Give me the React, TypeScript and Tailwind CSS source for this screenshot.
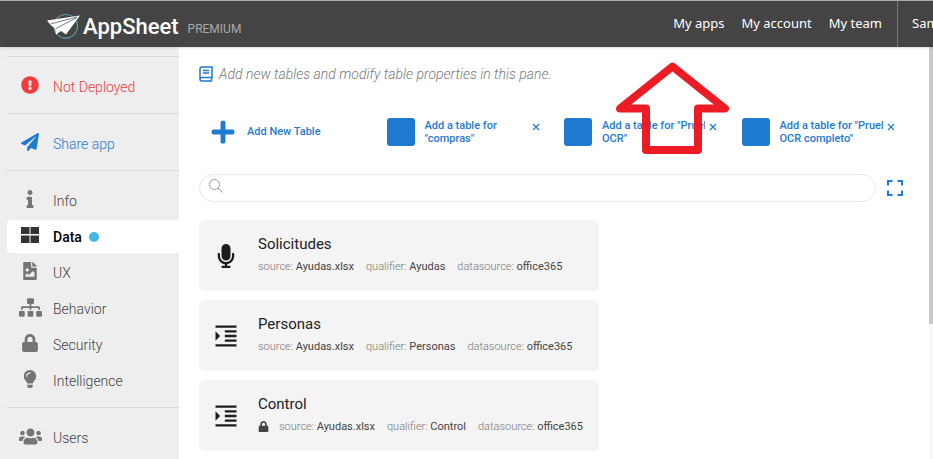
import type { ReactNode } from 'react'
import {
  FaExclamationCircle,
  FaFileImage,
  FaInfo,
  FaLightbulb,
  FaLock,
  FaMicrophone,
  FaPaperPlane,
  FaPlus,
  FaSitemap,
  FaUsers,
} from 'react-icons/fa'
import { MdFormatIndentIncrease } from 'react-icons/md'

function Logo() {
  return (
    <svg width="34" height="30" viewBox="0 0 34 30" aria-hidden="true">
      <circle cx="18.700" cy="17.300" r="11.800" fill="none" stroke="#5f97a8" strokeWidth="1.200" />
      <path d="M0 11.500 33 6.500 19 25.500 14 22 9 25.500 8 19.500 3.500 16Z" fill="#fff" />
      <path d="M30 8 3.500 15M30 8.500 9 19.500" stroke="#444" strokeWidth="0.700" fill="none" />
    </svg>
  )
}

function DataIcon() {
  return (
    <svg width="18" height="16" viewBox="0 0 18 16" fill="currentColor" aria-hidden="true">
      <path d="M0 0h8.500v7H0zM9.500 0H18v7H9.500zM0 8.500h8.500V16H0zM9.500 8.500H18V16H9.500z" />
    </svg>
  )
}

function BookIcon() {
  return (
    <svg width="14" height="16" viewBox="0 0 14 16" fill="none" stroke="#1f7ad1" aria-hidden="true">
      <path d="M1 13V3Q1 1 3 1H13v10.500H3Q1 11.500 1 13.200T3 15H13M12.500 11.500V15" strokeWidth="1.500" />
      <path d="M4 4.500h6M4 7h6" strokeWidth="1.400" />
    </svg>
  )
}

function NavItem({ icon, label, className = 'text-[#444]', iconClass = 'text-[#757575]' }: {
  icon: ReactNode
  label: string
  className?: string
  iconClass?: string
}) {
  return (
    <a href="#" className={`flex h-[33px] items-center pt-px text-sm ${className}`}>
      <span className={`-mt-1 flex w-[46px] shrink-0 justify-center ${iconClass}`}>{icon}</span>
      {label}
    </a>
  )
}

function Suggestion({ first, second }: { first: string; second: string }) {
  return (
    <div className="flex h-7 pl-[10px]">
      <button className="flex min-w-0 gap-[10px] text-left text-[11px] leading-[13px] font-medium text-[#1f7ad1]">
        <span className="size-7 shrink-0 rounded-[3px] bg-[#1f7ad1]" />
        <span className="w-[103px] overflow-hidden whitespace-nowrap pt-px">
          {first}
          <br />
          {second}
        </span>
      </button>
      <button aria-label="Dismiss" className="ml-[2px] flex h-4 w-3 shrink-0 items-center justify-center pt-px text-[#1f7ad1]">
        <svg width="8" height="8" viewBox="0 0 8 8" stroke="currentColor" strokeWidth="1.200" aria-hidden="true">
          <path d="M1 1l6 6M7 1 1 7" />
        </svg>
      </button>
    </div>
  )
}

function TableCard({ name, qualifier, icon, locked }: {
  name: string
  qualifier: string
  icon: ReactNode
  locked?: boolean
}) {
  const meta = [
    ['source', 'Ayudas.xlsx'],
    ['qualifier', qualifier],
    ['datasource', 'office365'],
  ]
  return (
    <li className="flex h-[71px] w-[400px] items-center rounded-md bg-[#f4f4f4]">
      <span className="flex w-[59px] justify-center pr-[5px] text-[#1c1c1c]">{icon}</span>
      <div className="pb-[3px]">
        <h2 className="text-[15px] leading-5 text-[#222]">{name}</h2>
        <div className="mt-[5px] flex items-center gap-3 text-[11px] leading-4 font-light">
          {locked && <FaLock className="-mr-[2px] text-[#444]" size={11} />}
          {meta.map(([key, value]) => (
            <span key={key} className="text-[#777]">
              {key}: <span className="font-normal text-[#444]">{value}</span>
            </span>
          ))}
        </div>
      </div>
    </li>
  )
}

export default function App() {
  return (
    <div className="flex h-screen flex-col overflow-hidden bg-white font-[Roboto,sans-serif]">
      {/* Top bar */}
      <header className="z-10 flex h-[47px] shrink-0 items-center overflow-hidden border-t border-[#aaa] bg-[#444] pl-[47px] shadow">
        <Logo />
        <span className="ml-[2px] pt-[4px] text-[22px] font-medium text-white">AppSheet</span>
        <span className="ml-[9px] pt-[9px] text-xs text-[#aaa]">PREMIUM</span>
        <nav className="ml-auto flex h-full shrink-0 items-center gap-[17px] font-['Noto_Sans',sans-serif] text-[13px] text-white">
          <a href="#">My apps</a>
          <a href="#">My account</a>
          <a href="#">My team</a>
          <a href="#" className="-ml-[2px] flex h-full w-9 items-center overflow-hidden border-l border-[#777] pl-[14px]">
            Samuel
          </a>
        </nav>
      </header>

      <div className="flex min-h-0 flex-1">
        {/* Sidebar */}
        <aside className="w-[179px] shrink-0 overflow-hidden bg-[#eee] pt-[9px] pl-[7px] font-light">
          <div className="border-t border-[#d9d9d9] pt-[13px] pb-[10px]">
            <NavItem icon={<FaExclamationCircle size={18} />} label="Not Deployed" className="text-[#f23a3f]" iconClass="text-[#f23a3f]" />
          </div>
          <div className="border-t border-[#d9d9d9] pt-[13px] pb-[10px]">
            <NavItem icon={<FaPaperPlane size={18} />} label="Share app" className="text-[#1f7ad1]" iconClass="text-[#1f7ad1]" />
          </div>
          <nav className="flex flex-col gap-[3px] border-t border-[#d9d9d9] pt-[13px] pb-[10px]">
            <NavItem icon={<FaInfo size={18} />} label="Info" />
            <div className="flex items-center rounded-l bg-white">
              <NavItem icon={<DataIcon />} label="Data" className="font-medium text-black" iconClass="text-[#333]" />
              <span className="ml-[7px] size-[10px] rounded-full bg-[#41b9e6]" />
            </div>
            <NavItem icon={<FaFileImage size={18} />} label="UX" />
            <NavItem icon={<FaSitemap size={23} />} label="Behavior" />
            <NavItem icon={<FaLock size={18} />} label="Security" />
            <NavItem icon={<FaLightbulb size={18} />} label="Intelligence" />
          </nav>
          <div className="border-t border-[#d9d9d9] pt-[13px]">
            <NavItem icon={<FaUsers size={23} />} label="Users" />
          </div>
        </aside>

        {/* Data pane */}
        <main className="min-w-0 flex-1 pt-[17px] pr-5 pl-5">
          <p className="flex h-5 items-center gap-[6px] text-sm font-light text-[#777] italic">
            <BookIcon />
            Add new tables and modify table properties in this pane.
          </p>

          <div className="relative mt-[34px] grid grid-cols-4">
            <button className="flex h-7 items-center gap-[11px] pl-[11px] text-[11px] font-medium text-[#1f7ad1]">
              <FaPlus size={26} />
              Add New Table
            </button>
            <Suggestion first={'Add a table for'} second={'"compras"'} />
            <Suggestion first={'Add a table for "Prueba'} second={'OCR"'} />
            <Suggestion first={'Add a table for "Prueba'} second={'OCR completo"'} />
            <svg width="118" height="96" viewBox="0 0 118 96" fill="none" className="absolute -top-[58px] left-[415px]" aria-hidden="true">
              <path
                d="M58.500 6.500 111 48.500H84v41.500H32V48.500H6Z"
                stroke="#ed1c24"
                strokeWidth="8"
                strokeLinejoin="round"
              />
            </svg>
          </div>

          <div className="mt-7 flex items-center">
            <label className="flex h-7 min-w-0 flex-1 items-center rounded-full border border-[#e8e8e8] px-[9px]">
              <svg width="14" height="14" viewBox="0 0 14 14" fill="none" stroke="#999" className="mb-1" aria-hidden="true">
                <circle cx="5.500" cy="5.500" r="5" />
                <path d="M9 9l4.500 4.500" />
              </svg>
              <input type="text" aria-label="Search tables" className="min-w-0 flex-1 pl-2 text-sm outline-none" />
            </label>
            <button aria-label="Expand all" className="mr-[6px] ml-[11px]">
              <svg width="16" height="16" viewBox="0 0 16 16" fill="none" stroke="#1f7ad1" strokeWidth="2" aria-hidden="true">
                <path d="M1 5.500V1h4.500M10.500 1H15v4.500M15 10.500V15h-4.500M5.500 15H1v-4.500" />
              </svg>
            </button>
          </div>

          <ul className="mt-[18px] flex flex-col gap-[9px]">
            <TableCard name="Solicitudes" qualifier="Ayudas" icon={<FaMicrophone size={24} />} />
            <TableCard name="Personas" qualifier="Personas" icon={<MdFormatIndentIncrease size={28} />} />
            <TableCard name="Control" qualifier="Control" icon={<MdFormatIndentIncrease size={28} />} locked />
          </ul>
        </main>
        {/* Scroll track */}
        <div className="w-1 shrink-0 bg-[#f7f7f7]">
          <div className="h-[277px] bg-[#c9c9c9]" />
        </div>
      </div>
    </div>
  )
}
